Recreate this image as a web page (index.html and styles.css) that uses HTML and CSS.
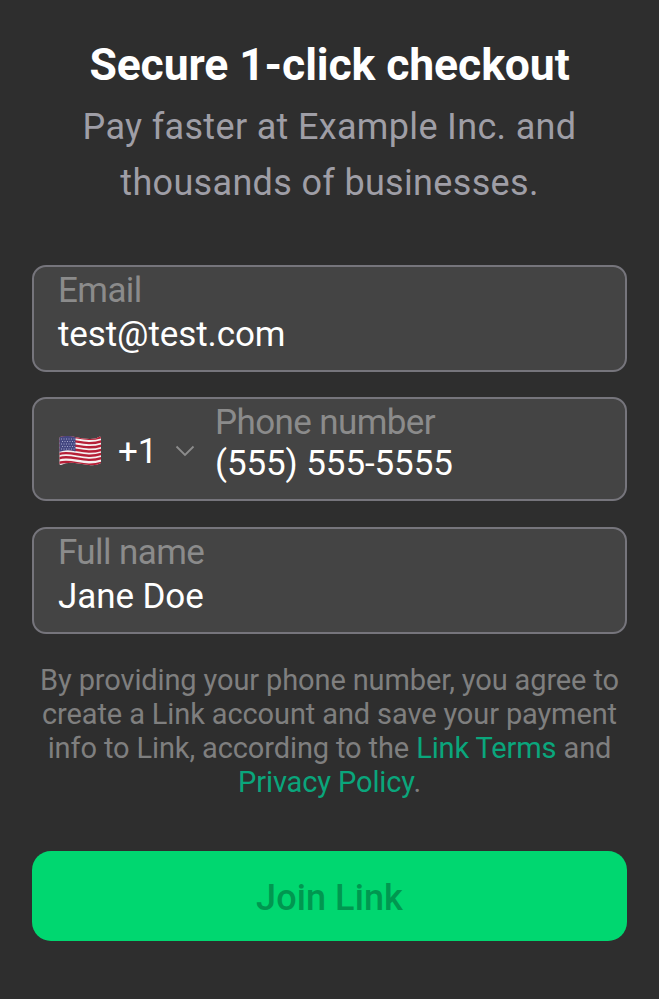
FILE: index.html
```html
<!DOCTYPE html>
<html lang="en">
<head>
<meta charset="utf-8">
<title>Join Link</title>
<link rel="stylesheet" href="styles.css">
</head>
<body>
<main class="sheet">
  <h1 class="title"><span>Secure 1-click checkout</span></h1>
  <p class="subtitle"><span>Pay faster at Example Inc. and</span><br><span>thousands of businesses.</span></p>
  <form class="form">
    <div class="field email"><span class="label">Email</span><span class="value">test@test.com</span></div>
    <div class="field phone">
      <svg class="flag" viewBox="0 0 44 36">
        <defs><clipPath id="wave"><path d="M2 4Q9 2 17 4T32 6Q38 6 42 3.500Q43 4 43 5V30Q38 33 31 32T17 30Q9 29 3 32Q1.500 32 1.500 31V5Z"/></clipPath></defs>
        <g clip-path="url(#wave)">
          <rect width="44" height="36" fill="#f4f0f0"/>
          <g fill="none" stroke="#b51f37" stroke-width="2.4">
            <path d="M0 4.500C13-.5 26 10 44 4M0 8.700C13 3.700 26 14.200 44 8.200M0 12.900C13 7.900 26 18.400 44 12.400M0 17.100C13 12.100 26 22.600 44 16.600M0 21.300C13 16.300 26 26.800 44 20.800M0 25.500C13 20.500 26 31 44 25M0 30.200C13 25.200 26 35.700 44 29.700"/>
          </g>
          <path d="M1 4Q9 1 17.500 4V18.500Q9 16 1 19Z" fill="#444781"/>
          <path d="M3 6h14M4 8.500h13M3 11h14M4 13.500h13M3 16h14" stroke="#a5a7cc" stroke-width="1" stroke-dasharray="1 1.500"/>
        </g>
      </svg>
      <span class="code">+1</span>
      <svg class="chevron" viewBox="0 0 20 12"><path d="M1.500 1.500l8.500 8.500 8.500-8.500"/></svg>
      <div class="number"><span class="label">Phone number</span><span class="value">(555) 555-5555</span></div>
    </div>
    <div class="field name"><span class="label">Full name</span><span class="value">Jane Doe</span></div>
  </form>
  <p class="terms"><span>By providing your phone number, you agree to</span><br><span>create a Link account and save your payment</span><br><span>info to Link, according to the <a>Link Terms</a> and</span><br><span><a>Privacy Policy</a>.</span></p>
  <button class="join" type="button">Join Link</button>
</main>
</body>
</html>
```
FILE: styles.css
```css
* { box-sizing: border-box; }
body { margin: 0; background: #2e2e2e; color: #fff; font-family: Roboto, sans-serif; }
.sheet { height: 999px; padding: 38px 32px 0; display: flex; flex-direction: column; text-align: center; }
.title { margin: 0; font-size: 44.5px; line-height: 54px; font-weight: 700; letter-spacing: -.1px; white-space: nowrap; }
.subtitle { margin: 7px 0 0; font-size: 36px; line-height: 56px; letter-spacing: .33px; color: #9f9ea6; white-space: nowrap; }
.form { margin-top: 54px; display: flex; flex-direction: column; gap: 26px; text-align: left; }
.field { height: 107px; padding: 3px 24px; border: 2px solid #76757c; border-radius: 14px; background: #444; font-size: 35px; white-space: nowrap; }
.label, .value { display: block; line-height: 42px; }
.label { color: #8b8b8b; letter-spacing: -.6px; }
.value { margin-top: 2px; letter-spacing: -.1px; }
.phone { height: 104px; margin-top: -1px; display: flex; align-items: center; }
.phone .value { margin-top: -1px; }
.flag { width: 44px; height: 36px; margin-top: 3px; }
.code { margin: 4px 0 0 16px; width: 39px; }
.chevron { width: 20px; height: 12px; margin: 3px 21px 0 18px; fill: none; stroke: #8c8c8c; stroke-width: 1.8; }
.number { margin: -11px 0 0 -1px; }
.terms { margin: 29px 0 0; font-size: 29px; line-height: 34.1px; letter-spacing: -.12px; color: #7f7f7f; white-space: nowrap; }
.terms a { color: #0aa67c; }
.join { margin-top: 52px; height: 90px; padding: 3px 0 0; border: 0; border-radius: 19px; background: #00d770; color: #009750; font: 500 36px Roboto, sans-serif; letter-spacing: .1px; }
```
